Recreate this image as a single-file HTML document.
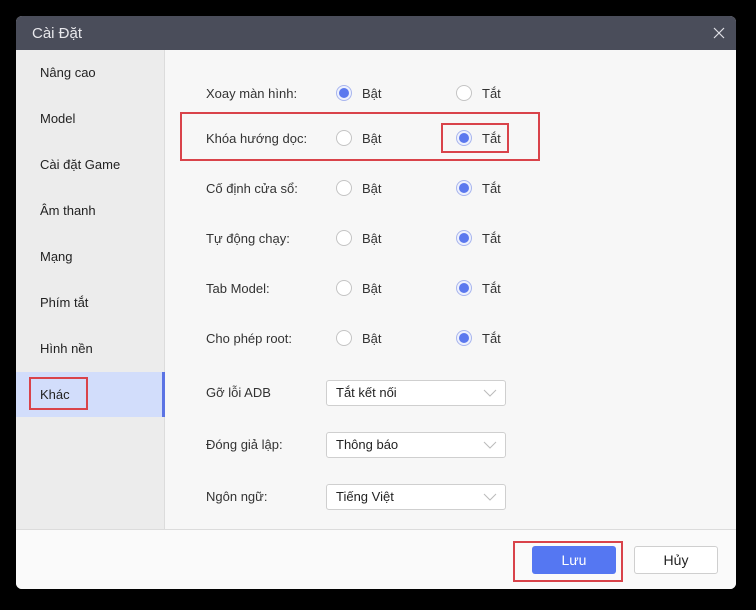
<!DOCTYPE html>
<html><head><meta charset="utf-8"><style>
*{margin:0;padding:0;box-sizing:border-box}
body{width:756px;height:610px;background:#000;position:relative;overflow:hidden;font-family:"Liberation Sans","DejaVu Sans",sans-serif;font-size:13px;color:#333}
.a{position:absolute}
.dlg{left:16px;top:16px;width:720px;height:573px;background:#f7f7f7;border-radius:6px;overflow:hidden}
.title{left:0;top:0;width:720px;height:34px;background:#4a4d5a;color:#e8e8ec;font-size:15px;line-height:36px;padding-left:16px}
.side{left:0;top:34px;width:149px;height:479px;background:#ececec;border-right:1px solid #dcdcdc}
.si{left:24px;font-size:13px;color:#222;line-height:16px}
.foot{left:0;top:513px;width:720px;height:60px;background:#fafafa;border-top:1px solid #dcdcdc}
.lbl{font-size:13px;color:#333;line-height:16px}
.r{width:16px;height:16px;border-radius:50%;border:1px solid #c4c4c4;background:#fff}
.r.on{border:1px solid #a9b6ee;background:#eef1fd}
.r.on::after{content:"";position:absolute;left:2px;top:2px;width:10px;height:10px;border-radius:50%;background:#5b78ee}
.dd{width:180px;height:26px;border:1px solid #cfcfcf;border-radius:3px;background:#fff;padding-left:9px;line-height:24px;font-size:13px;color:#222}
.dd svg{position:absolute;right:8px;top:8px}
.red{border:2.5px solid #d9434a}
</style></head><body>
<div class="a dlg">
 <div class="a title">Cài Đặt</div>
 <svg class="a" style="left:697px;top:11px" width="12" height="12" viewBox="0 0 12 12"><path d="M1 1L11 11M11 1L1 11" stroke="#e0e0e6" stroke-width="1.2"/></svg>
 <div class="a side"></div>
 <div class="a" style="left:0;top:356px;width:149px;height:45px;background:#d2ddfb"></div>
 <div class="a" style="left:146px;top:356px;width:3px;height:45px;background:#5b73e4"></div>
 <div class="a si" style="top:49px">Nâng cao</div>
 <div class="a si" style="top:95px">Model</div>
 <div class="a si" style="top:141px">Cài đặt Game</div>
 <div class="a si" style="top:187px">Âm thanh</div>
 <div class="a si" style="top:233px">Mạng</div>
 <div class="a si" style="top:279px">Phím tắt</div>
 <div class="a si" style="top:325px">Hình nền</div>
 <div class="a si" style="top:371px">Khác</div>
 <div class="a foot"></div>
</div>

<div class="a lbl" style="left:206px;top:86px">Xoay màn hình:</div>
<div class="a r on" style="left:336px;top:85px"></div><div class="a lbl" style="left:362px;top:86px">Bật</div>
<div class="a r" style="left:456px;top:85px"></div><div class="a lbl" style="left:482px;top:86px">Tắt</div>

<div class="a lbl" style="left:206px;top:131px">Khóa hướng dọc:</div>
<div class="a r" style="left:336px;top:130px"></div><div class="a lbl" style="left:362px;top:131px">Bật</div>
<div class="a r on" style="left:456px;top:130px"></div><div class="a lbl" style="left:482px;top:131px">Tắt</div>

<div class="a lbl" style="left:206px;top:181px">Cố định cửa sổ:</div>
<div class="a r" style="left:336px;top:180px"></div><div class="a lbl" style="left:362px;top:181px">Bật</div>
<div class="a r on" style="left:456px;top:180px"></div><div class="a lbl" style="left:482px;top:181px">Tắt</div>

<div class="a lbl" style="left:206px;top:231px">Tự động chạy:</div>
<div class="a r" style="left:336px;top:230px"></div><div class="a lbl" style="left:362px;top:231px">Bật</div>
<div class="a r on" style="left:456px;top:230px"></div><div class="a lbl" style="left:482px;top:231px">Tắt</div>

<div class="a lbl" style="left:206px;top:281px">Tab Model:</div>
<div class="a r" style="left:336px;top:280px"></div><div class="a lbl" style="left:362px;top:281px">Bật</div>
<div class="a r on" style="left:456px;top:280px"></div><div class="a lbl" style="left:482px;top:281px">Tắt</div>

<div class="a lbl" style="left:206px;top:331px">Cho phép root:</div>
<div class="a r" style="left:336px;top:330px"></div><div class="a lbl" style="left:362px;top:331px">Bật</div>
<div class="a r on" style="left:456px;top:330px"></div><div class="a lbl" style="left:482px;top:331px">Tắt</div>

<div class="a lbl" style="left:206px;top:385px">Gỡ lỗi ADB</div>
<div class="a dd" style="left:326px;top:380px">Tắt kết nối<svg width="14" height="8" viewBox="0 0 14 8"><path d="M1 1L7 7L13 1" stroke="#bbb" fill="none"/></svg></div>
<div class="a lbl" style="left:206px;top:437px">Đóng giả lập:</div>
<div class="a dd" style="left:326px;top:432px">Thông báo<svg width="14" height="8" viewBox="0 0 14 8"><path d="M1 1L7 7L13 1" stroke="#bbb" fill="none"/></svg></div>
<div class="a lbl" style="left:206px;top:489px">Ngôn ngữ:</div>
<div class="a dd" style="left:326px;top:484px">Tiếng Việt<svg width="14" height="8" viewBox="0 0 14 8"><path d="M1 1L7 7L13 1" stroke="#bbb" fill="none"/></svg></div>

<div class="a" style="left:532px;top:546px;width:84px;height:28px;background:#5577f2;border-radius:3px;color:#fff;text-align:center;line-height:28px;font-size:14px">Lưu</div>
<div class="a" style="left:634px;top:546px;width:84px;height:28px;background:#fff;border:1px solid #cfcfcf;border-radius:3px;color:#222;text-align:center;line-height:26px;font-size:14px">Hủy</div>

<div class="a red" style="left:180px;top:112px;width:360px;height:49px"></div>
<div class="a red" style="left:441px;top:123px;width:68px;height:30px"></div>
<div class="a red" style="left:29px;top:377px;width:59px;height:33px"></div>
<div class="a red" style="left:513px;top:541px;width:110px;height:41px"></div>
</body></html>
